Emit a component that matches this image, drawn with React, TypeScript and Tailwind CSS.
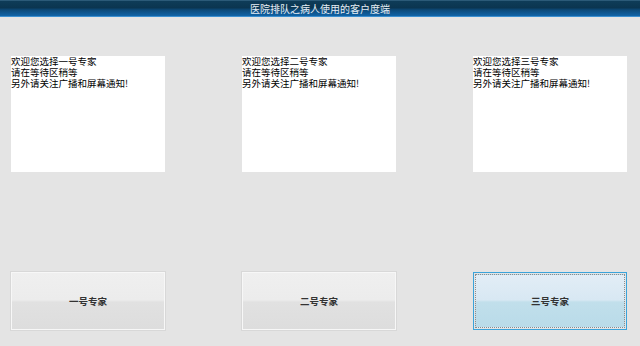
const experts = ['一号专家', '二号专家', '三号专家'];

const TextPanel = ({ name }: { name: string }) => (
  <div className="h-[116px] w-[154px] bg-white text-[9.5px] leading-[11px] text-black">
    <p>欢迎您选择{name}</p>
    <p>请在等待区稍等</p>
    <p>另外请关注广播和屏幕通知!</p>
  </div>
);

const ExpertButton = ({ name, active }: { name: string; active?: boolean }) =>
  active ? (
    <button
      type="button"
      className="h-[58px] w-[154px] border border-[#3aa3da] p-px"
    >
      <div className="flex h-full w-full items-center justify-center border border-dotted border-[#8c8c8c] bg-[linear-gradient(to_bottom,#e2edf6_0%,#d8e8f3_48%,#c1dfeb_52%,#b9dbe9_100%)] text-[9.5px] font-bold text-[#333]">
        {name}
      </div>
    </button>
  ) : (
    <button
      type="button"
      className="flex h-[58px] w-[154px] items-center justify-center border border-[#f7f7f7] bg-[linear-gradient(to_bottom,#efefef_0%,#ececec_48%,#e1e1e1_52%,#dddddd_100%)] text-[9.5px] font-bold text-[#333] shadow-[0_0_0_1px_#d8d8d8]"
    >
      {name}
    </button>
  );

const App = () => {
  return (
    <div
      className="flex h-[346px] w-[640px] flex-col bg-[#e4e4e4]"
      style={{ fontFamily: '"Noto Sans CJK SC", "Liberation Sans", sans-serif' }}
    >
      <div className="flex h-[17px] items-center justify-center border-t border-t-[#2b5a78] border-b border-b-[#3b8fd0] bg-[linear-gradient(to_bottom,#0e3c58_0%,#0b3550_45%,#0c4a7a_60%,#1064a8_100%)] text-[10px] leading-none text-[#e6eef5]">
        医院排队之病人使用的客户度端
      </div>
      <div className="mt-[39px] flex gap-[77px] px-[11px]">
        {experts.map((e) => (
          <TextPanel key={e} name={e} />
        ))}
      </div>
      <div className="mt-[100px] flex gap-[77px] px-[11px]">
        {experts.map((e, i) => (
          <ExpertButton key={e} name={e} active={i === 2} />
        ))}
      </div>
    </div>
  );
};

export default App;
